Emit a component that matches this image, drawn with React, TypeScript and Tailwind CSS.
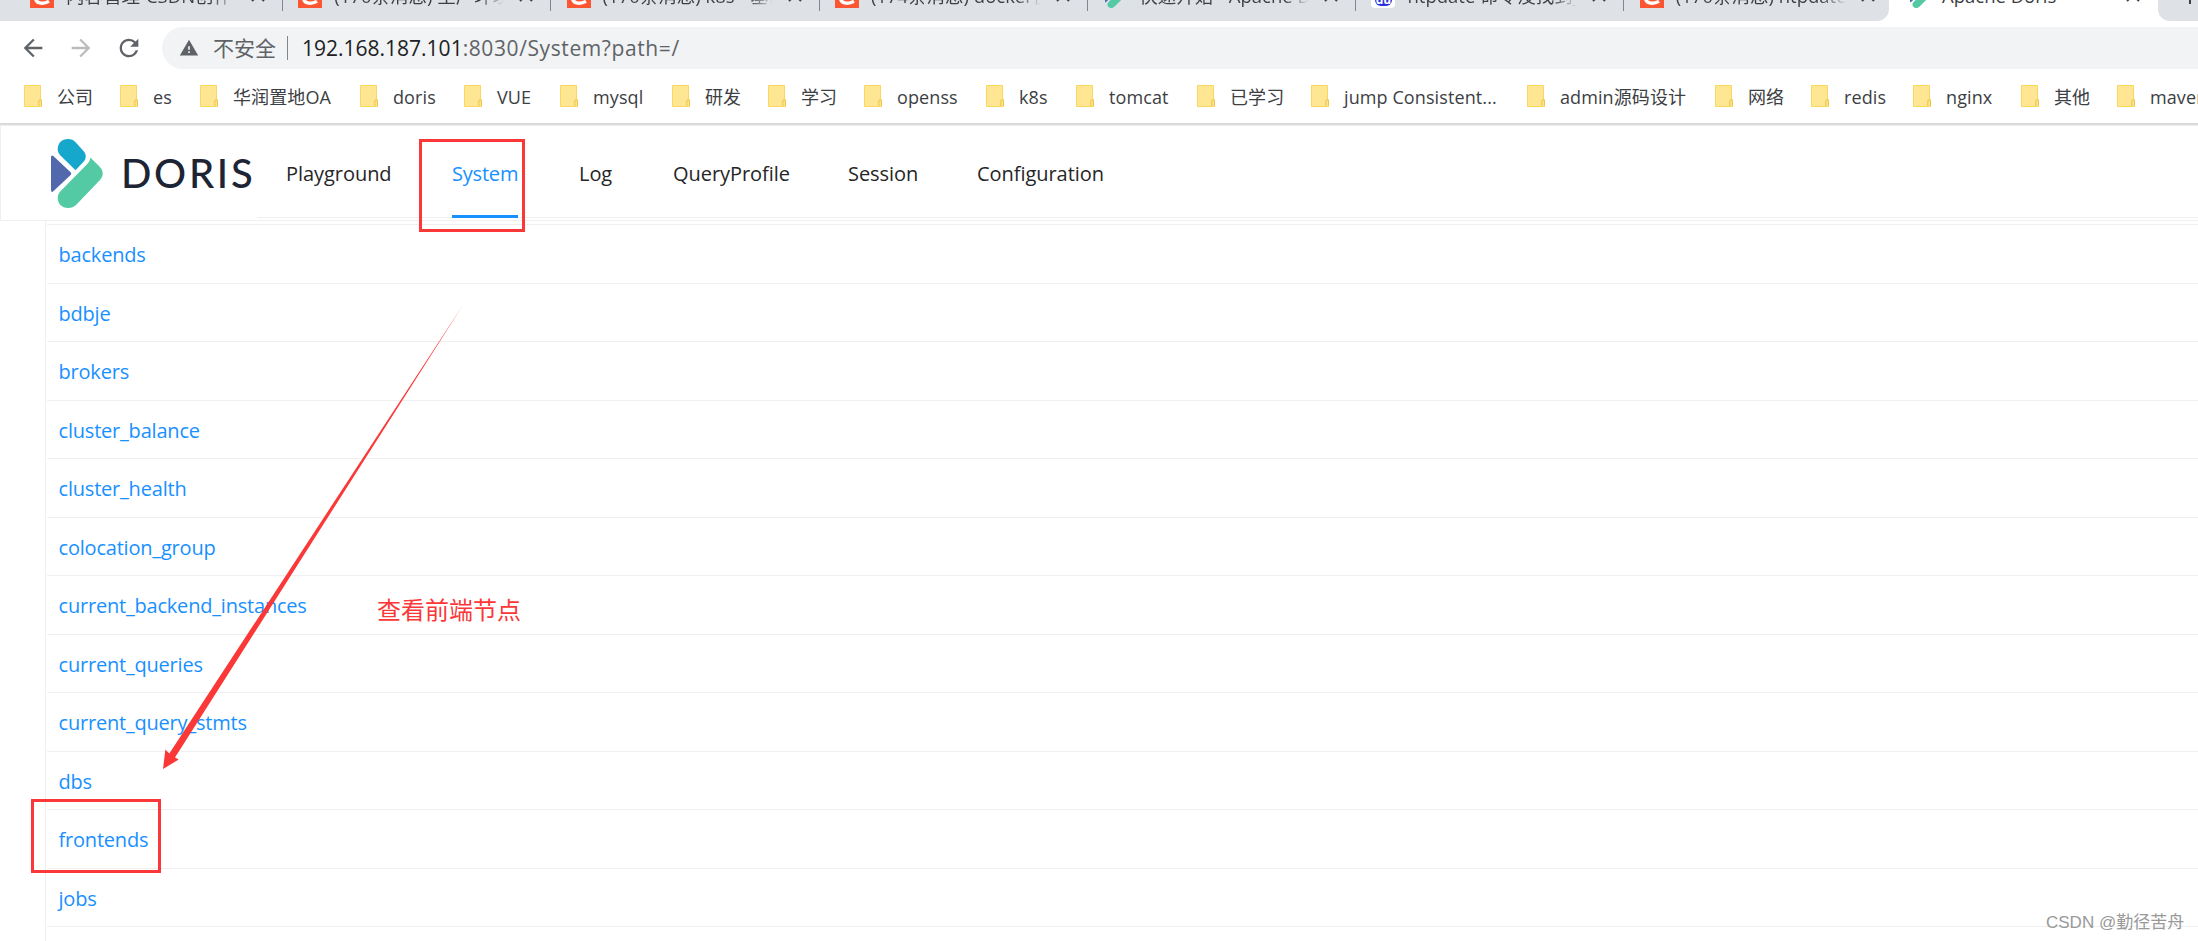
import React from 'react';
import { MdArrowBack, MdArrowForward, MdRefresh, MdWarning } from 'react-icons/md';

type TabIcon = 'csdn' | 'doris' | 'baidu';

interface Tab {
    icon: TabIcon;
    title: string;
    last?: boolean;
}

const TABS: Tab[] = [
    { icon: 'csdn', title: '内容管理-CSDN创作中心' },
    { icon: 'csdn', title: '(170条消息) 生产环境部署' },
    { icon: 'csdn', title: '(170条消息) k8s - 基础知识' },
    { icon: 'csdn', title: '(174条消息) docker快速' },
    { icon: 'doris', title: '快速开始 - Apache Doris' },
    { icon: 'baidu', title: 'ntpdate 命令没找到_百度' },
    { icon: 'csdn', title: '(170条消息) ntpdate命令', last: true },
];

// width is the full slot of the bookmark, up to the next folder icon
const BOOKMARKS = [
    { label: '公司', width: 'w-[96px]' },
    { label: 'es', width: 'w-[80px]' },
    { label: '华润置地OA', width: 'w-[160px]' },
    { label: 'doris', width: 'w-[104px]' },
    { label: 'VUE', width: 'w-[96px]' },
    { label: 'mysql', width: 'w-[112px]' },
    { label: '研发', width: 'w-[96px]' },
    { label: '学习', width: 'w-[96px]' },
    { label: 'openss', width: 'w-[122px]' },
    { label: 'k8s', width: 'w-[90px]' },
    { label: 'tomcat', width: 'w-[121px]' },
    { label: '已学习', width: 'w-[114px]' },
    { label: 'jump Consistent...', width: 'w-[216px]' },
    { label: 'admin源码设计', width: 'w-[188px]' },
    { label: '网络', width: 'w-[96px]' },
    { label: 'redis', width: 'w-[102px]' },
    { label: 'nginx', width: 'w-[108px]' },
    { label: '其他', width: 'w-[96px]' },
    { label: 'maven', width: 'w-[110px]' },
];

const NAV_ITEMS = [
    { label: 'Playground', width: 'w-[166px]' },
    { label: 'System', width: 'w-[127px]', active: true },
    { label: 'Log', width: 'w-[94px]' },
    { label: 'QueryProfile', width: 'w-[175px]' },
    { label: 'Session', width: 'w-[129px]' },
    { label: 'Configuration', width: 'w-[160px]' },
];

const PATHS = [
    'backends',
    'bdbje',
    'brokers',
    'cluster_balance',
    'cluster_health',
    'colocation_group',
    'current_backend_instances',
    'current_queries',
    'current_query_stmts',
    'dbs',
    'frontends',
    'jobs',
];

const DorisMark: React.FC<{ className?: string }> = ({ className }) => (
    <svg viewBox="0 0 52 69" className={className} preserveAspectRatio="none">
        <path d="M0 18.5Q0 15 2.6 17.3L19.6 33.2Q21 34.5 19.6 36L2.6 52Q0 54.3 0 50.8Z" fill="#5268ad" />
        <path d="M6.7 10C6.7 4 11 0 17 0C20.3 0 22.5 1 24.6 3.2L32.5 12C35.5 15.5 35.5 19.5 32.5 22.8L24.5 31.2L9.2 16.2C7.5 14.4 6.7 12.5 6.7 10Z" fill="#16a8cc" />
        <path d="M39.3 18.5L48.5 27.5C52.8 31.8 52.8 37 48.5 41.5L25.5 65.5C23 68 20.5 69 17 69C11 69 6.7 64.8 6.7 59C6.7 56.3 7.7 54 9.7 51.9L35.8 25.5C38 23.3 39.1 21.2 39.3 18.5Z" fill="#53caa4" />
    </svg>
);

const TabFavicon: React.FC<{ icon: TabIcon }> = ({ icon }) => {
    if (icon === 'doris') {
        return <DorisMark className="mr-[3px] ml-0.5 h-6 w-[19px] shrink-0" />;
    }
    if (icon === 'baidu') {
        return (
            <span className="flex h-6 w-6 shrink-0 items-end justify-center rounded bg-white pb-0.5">
                <span className="flex h-4 w-[17px] items-center justify-center rounded-[6px] bg-[#2932e1] pt-1 text-[12px] leading-none font-bold text-white">
                    du
                </span>
            </span>
        );
    }
    return (
        <svg viewBox="0 0 24 24" className="h-6 w-6 shrink-0">
            <rect width="24" height="24" fill="#fc5531" />
            <path d="M19.5 6.5C12 2.5 5.5 6.5 5.5 13.5C5.5 19.5 12.5 20.8 19 17.3" fill="none" stroke="#fff" strokeWidth="3.4" />
        </svg>
    );
};

const CloseIcon = () => (
    <svg viewBox="0 0 14 14" className="h-[14px] w-[14px] shrink-0">
        <path d="M1 1L13 13M13 1L1 13" stroke="#3c4043" strokeWidth="2" />
    </svg>
);

const BrowserTab: React.FC<{ tab: Tab }> = ({ tab }) => (
    <div className="flex w-[268.3px] shrink-0 items-end">
        <TabFavicon icon={tab.icon} />
        <div className="mb-[-1px] ml-3 h-[27px] w-[170px] shrink-0 overflow-hidden bg-gradient-to-r from-[#3c4043] from-85% to-[#dee1e6] bg-clip-text text-[18.5px] leading-[27px] whitespace-nowrap text-transparent">
            {tab.title}
        </div>
        <div className="mb-1.5 ml-[15px]">
            <CloseIcon />
        </div>
        {!tab.last && <div className="mb-[-3px] ml-[17px] h-6 w-px bg-[#80868b]" />}
    </div>
);

const TabStrip = () => (
    <div className="flex h-[21px] overflow-hidden bg-white">
        <div className="flex h-[21px] w-[1889px] shrink-0 items-end rounded-br-[12px] bg-[#dee1e6] pb-[13px] pl-[30px]">
            {TABS.map((tab) => (
                <BrowserTab key={tab.title} tab={tab} />
            ))}
        </div>
        <div className="flex h-[21px] w-[269px] shrink-0 items-end bg-white pb-[13px] pl-[19px]">
            <TabFavicon icon="doris" />
            <div className="mb-[-1px] ml-[10px] h-[27px] w-[184px] text-[18.5px] leading-[27px] whitespace-nowrap text-[#3c4043]">
                Apache Doris
            </div>
            <div className="mb-1.5">
                <CloseIcon />
            </div>
        </div>
        <div className="h-[21px] grow rounded-bl-[12px] bg-[#dee1e6] pl-[31px]">
            <div className="h-1 w-0.5 bg-[#3c4043]" />
        </div>
    </div>
);

const AddressBar = () => (
    <div className="flex h-[54px] items-center bg-white pl-[19px]">
        <MdArrowBack className="h-7 w-7 text-[#5f6368]" />
        <MdArrowForward className="ml-5 h-7 w-7 text-[#babcbe]" />
        <MdRefresh className="ml-5 h-7 w-7 text-[#5f6368]" />
        <div className="ml-[19px] flex h-[42px] grow items-center rounded-l-full bg-[#f1f3f4] pl-[17px]">
            <MdWarning className="h-5 w-5 text-[#5f6368]" />
            <span className="ml-[14px] w-[74px] pt-0.5 text-[21px] text-[#5f6368]">不安全</span>
            <span className="h-6 w-px bg-[#80868b]" />
            <span className="ml-[14px] pt-0.5 text-[21px] tracking-[0.6px] whitespace-nowrap text-[#5f6368]">
                <span className="tracking-normal text-[#202124]">192.168.187.101</span>:8030/System?path=/
            </span>
        </div>
    </div>
);

const FolderIcon = () => (
    <svg viewBox="0 0 18 22" className="h-[22px] w-[18px] shrink-0">
        <path d="M0.5 0.5H16.5V14.5H17.5V21.5H0.5Z" fill="#ffe693" stroke="#fbd75e" />
        <path d="M14.8 21V16.2Q14.8 14.8 16.1 14.8Q17.4 14.8 17.4 16.2V21" fill="#ffe693" stroke="#e8c344" />
    </svg>
);

const BookmarksBar = () => (
    <div className="flex h-[48px] items-start overflow-hidden bg-white pt-[10px] pl-6">
        {BOOKMARKS.map((item) => (
            <div key={item.label} className={`flex shrink-0 items-start gap-[15px] ${item.width}`}>
                <FolderIcon />
                <span className="text-[18px] leading-6 tracking-[0.1px] whitespace-nowrap text-[#3c4043]">
                    {item.label}
                </span>
            </div>
        ))}
    </div>
);

const Header = () => (
    <header className="flex h-[96px] border border-r-0 border-[#efefef] bg-white">
        <div className="flex w-[256px] shrink-0 items-center pl-[50px]">
            <DorisMark className="h-[69px] w-[52px] shrink-0" />
            <span className="ml-[18px] font-['Lato'] text-[40px] leading-none font-medium tracking-[2.7px] text-[#1d2434]">
                DORIS
            </span>
        </div>
        <nav className="flex h-[92px] grow border-b border-[#efefef] pl-[29px]">
            {NAV_ITEMS.map((item) => (
                <div key={item.label} className={`shrink-0 ${item.width}`}>
                    <a
                        className={
                            item.active
                                ? 'inline-block h-[92px] border-b-[3px] border-[#1890ff] text-[20px] leading-[96px] tracking-[-0.2px] text-[#1890ff]'
                                : 'inline-block h-[92px] text-[20px] leading-[96px] tracking-[-0.05px] text-[#262626]'
                        }
                    >
                        {item.label}
                    </a>
                </div>
            ))}
        </nav>
    </header>
);

const PathTable = () => (
    <main className="ml-[45px] h-[720px] overflow-hidden border-l border-[#efefef] pt-[3px] pl-px">
        <div className="border-t border-[#efefef]">
            {PATHS.map((path) => (
                <div key={path} className="flex h-[58.5px] items-center border-b border-[#efefef] pt-[3px] pl-[11.5px]">
                    <a className="text-[20px] leading-[30px] tracking-[-0.2px] text-[#1890ff]">{path}</a>
                </div>
            ))}
        </div>
    </main>
);

// Red marks drawn over the page
const Annotations = () => (
    <>
        <div className="absolute top-[139px] left-[419px] h-[93px] w-[106px] border-[3px] border-[#fb3838]" />
        <div className="absolute top-[799px] left-[31px] h-[74px] w-[130px] border-[3px] border-[#fb3838]" />
        <svg viewBox="0 0 310 470" className="absolute top-[302px] left-[158px] h-[470px] w-[310px]">
            <path d="M305 3L17 455.5L20.8 457.5L5 467L7.4 447.5L11.3 451.5Z" fill="#fb3838" />
        </svg>
        <div className="absolute top-[592px] left-[377px] text-[24px] leading-9 whitespace-nowrap text-[#fb3838]">
            查看前端节点
        </div>
        <div className="absolute top-[911px] left-[2046px] font-['Liberation_Sans','Noto_Sans_CJK_SC',sans-serif] text-[17px] leading-6 whitespace-nowrap text-[#999999]">
            CSDN @勤径苦舟
        </div>
    </>
);

const App: React.FC = () => {
    return (
        <div className="relative h-[941px] w-full overflow-hidden bg-white font-['Open_Sans','Noto_Sans_CJK_SC',sans-serif]">
            <TabStrip />
            <AddressBar />
            <BookmarksBar />
            <div className="h-0.5 bg-[#dadada]" />
            <Header />
            <PathTable />
            <Annotations />
        </div>
    );
};

export default App;
